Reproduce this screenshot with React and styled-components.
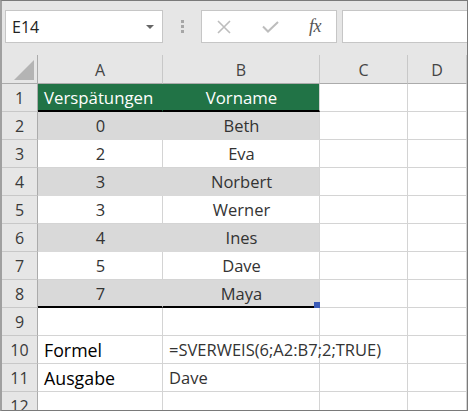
import React from "react";
import styled, { createGlobalStyle, css } from "styled-components";

const Global = createGlobalStyle`
  html, body { margin: 0; padding: 0; background: #fff; }
  * { box-sizing: border-box; }
`;

const FONT = `"Open Sans", "Noto Sans", "DejaVu Sans", sans-serif`;

const Frame = styled.div`
  width: 468px;
  height: 411px;
  border: 1px solid #7a7a7a;
  border-left: 2px solid #a0a0a0;
  background: #e6e6e6;
  overflow: hidden;
  font-family: ${FONT};
`;

const Toolbar = styled.div`
  height: 54px;
  display: flex;
  align-items: flex-start;
  padding: 9px 0 0 3px;
`;

const NameBox = styled.div`
  width: 158px;
  height: 33px;
  background: #fff;
  border: 1px solid #c6c6c6;
  display: flex;
  align-items: center;
  justify-content: space-between;
  padding: 0 8px 0 6px;
  font-size: 16px;
  color: #222;
`;

const Caret = styled.span`
  width: 0;
  height: 0;
  border-left: 4px solid transparent;
  border-right: 4px solid transparent;
  border-top: 4px solid #666;
  margin-top: 1px;
`;

const Grip = styled.div`
  width: 38px;
  height: 33px;
  display: flex;
  flex-direction: column;
  align-items: center;
  justify-content: center;
  gap: 2px;
  padding-bottom: 1px;
`;

const GripDot = styled.span`
  width: 3px;
  height: 3px;
  background: #a6a6a6;
`;

const FxBox = styled.div`
  width: 136px;
  height: 33px;
  background: #fff;
  border: 1px solid #c6c6c6;
  display: flex;
  align-items: center;
  padding-left: 15px;
  gap: 31px;
`;

const FxText = styled.span`
  font-family: "Liberation Serif", "DejaVu Serif", serif;
  font-style: italic;
  font-size: 18px;
  color: #555;
  margin-left: -1px;
  letter-spacing: -0.5px;
`;

const FormulaInput = styled.div`
  flex: 1;
  height: 33px;
  margin-left: 5px;
  background: #fff;
  border: 1px solid #c6c6c6;
  border-right: none;
`;

const Sheet = styled.div`
  display: grid;
  grid-template-columns: 36px 125px 157px 88px 1fr;
  grid-auto-rows: 28px;
  grid-template-rows: 29px;
  background: #fff;
`;

const Corner = styled.div`
  background: #e6e6e6;
  border-right: 1px solid #ababab;
  border-bottom: 1px solid #ababab;
  display: flex;
  align-items: flex-end;
  justify-content: flex-end;
  padding: 0 3px 3px 0;
`;

const ColHead = styled.div`
  background: #e6e6e6;
  border-right: 1px solid #c8c8c8;
  border-bottom: 1px solid #ababab;
  display: flex;
  align-items: center;
  justify-content: center;
  font-size: 16px;
  color: #444;
  padding-top: 1px;
`;

const RowHead = styled.div`
  background: #e6e6e6;
  border-right: 1px solid #ababab;
  border-bottom: 1px solid #c8c8c8;
  display: flex;
  align-items: center;
  justify-content: center;
  font-size: 16px;
  color: #3a3a3a;
`;

const tones = {
  head: css`
    background: #217346;
    color: #fff;
    font-size: 16.8px;
    border-bottom: 2px solid #000;
  `,
  band: css`
    background: #d9d9d9;
    color: #333;
    font-size: 16.5px;
    border-bottom: 1px solid #d9d9d9;
  `,
  bandLast: css`
    background: #d9d9d9;
    color: #333;
    font-size: 16.5px;
    border-bottom: 2px solid #000;
  `,
  plain: css`
    background: transparent;
    color: #333;
    font-size: 16.5px;
    border-bottom: 1px solid #d4d4d4;
  `,
  label: css`
    background: transparent;
    color: #000;
    font-size: 17.8px;
    border-bottom: 1px solid #d4d4d4;
  `,
};

const Cell = styled.div`
  position: relative;
  display: flex;
  align-items: center;
  white-space: nowrap;
  padding: 0 5px 0 6px;
  justify-content: ${(p) => (p.$align === "center" ? "center" : "flex-start")};
  border-right: 1px solid ${(p) => (p.$joined ? "transparent" : "#d4d4d4")};
  ${(p) => tones[p.$tone || "plain"]}
  ${(p) => p.$joined && p.$tone === "head" && css`border-right-color: #217346;`}
  ${(p) => p.$joined && (p.$tone === "band" || p.$tone === "bandLast") && css`border-right-color: #d9d9d9;`}
`;

const FillHandle = styled.span`
  position: absolute;
  right: -1px;
  bottom: -2px;
  width: 6px;
  height: 6px;
  background: #3a5bb8;
`;

const XIcon = () => (
  <svg width="14" height="14" viewBox="0 0 14 14">
    <path d="M1 1 L13 13 M13 1 L1 13" stroke="#bdbdbd" strokeWidth="1.6" fill="none" />
  </svg>
);

const CheckIcon = () => (
  <svg width="17" height="12" viewBox="0 0 17 12">
    <path d="M1 5.5 L6 10.5 L16 1" stroke="#bdbdbd" strokeWidth="2" fill="none" />
  </svg>
);

const CornerTriangle = () => (
  <svg width="20" height="20" viewBox="0 0 20 20">
    <path d="M20 0 L20 20 L0 20 Z" fill="#b4b4b4" />
  </svg>
);

const data = [
  ["0", "Beth"],
  ["2", "Eva"],
  ["3", "Norbert"],
  ["3", "Werner"],
  ["4", "Ines"],
  ["5", "Dave"],
  ["7", "Maya"],
];

export default function App() {
  return (
    <>
      <Global />
      <Frame>
        <Toolbar>
          <NameBox>
            <span>E14</span>
            <Caret />
          </NameBox>
          <Grip>
            <GripDot />
            <GripDot />
            <GripDot />
          </Grip>
          <FxBox>
            <XIcon />
            <CheckIcon />
            <FxText>fx</FxText>
          </FxBox>
          <FormulaInput />
        </Toolbar>
        <Sheet>
          <Corner>
            <CornerTriangle />
          </Corner>
          <ColHead>A</ColHead>
          <ColHead>B</ColHead>
          <ColHead>C</ColHead>
          <ColHead>D</ColHead>

          <RowHead>1</RowHead>
          <Cell $tone="head" $joined>Verspätungen</Cell>
          <Cell $tone="head" $align="center">Vorname</Cell>
          <Cell />
          <Cell />

          {data.map(([n, name], i) => {
            const banded = i % 2 === 0;
            const last = i === data.length - 1;
            const tone = banded ? (last ? "bandLast" : "band") : "plain";
            return (
              <React.Fragment key={i}>
                <RowHead>{i + 2}</RowHead>
                <Cell $tone={tone} $align="center" $joined={banded}>{n}</Cell>
                <Cell $tone={tone} $align="center">
                  {name}
                  {last && <FillHandle />}
                </Cell>
                <Cell />
                <Cell />
              </React.Fragment>
            );
          })}

          <RowHead>9</RowHead>
          <Cell />
          <Cell />
          <Cell />
          <Cell />

          <RowHead>10</RowHead>
          <Cell $tone="label">Formel</Cell>
          <Cell>=SVERWEIS(6;A2:B7;2;TRUE)</Cell>
          <Cell />
          <Cell />

          <RowHead>11</RowHead>
          <Cell $tone="label">Ausgabe</Cell>
          <Cell>Dave</Cell>
          <Cell />
          <Cell />

          <RowHead>12</RowHead>
          <Cell />
          <Cell />
          <Cell />
          <Cell />
        </Sheet>
      </Frame>
    </>
  );
}
